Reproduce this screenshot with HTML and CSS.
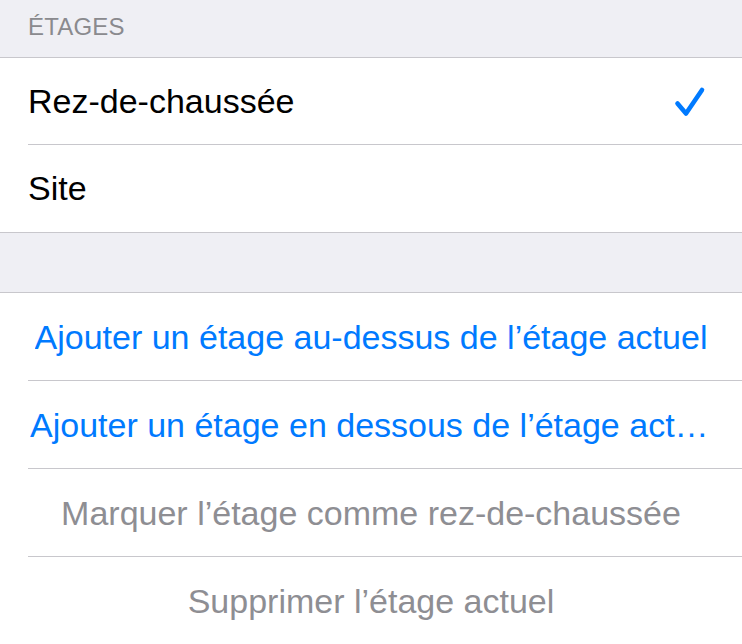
FILE: index.html
```html
<!DOCTYPE html>
<html lang="fr">
<head>
<meta charset="utf-8">
<title>Étages</title>
<link rel="stylesheet" href="styles.css">
</head>
<body>
<div class="screen">
  <div class="section-header">ÉTAGES</div>
  <div class="group">
    <div class="row">
      <span class="label">Rez-de-chaussée</span>
      <svg class="check" width="36" height="32" viewBox="0 0 36 32" aria-hidden="true">
        <path d="M5.5 17.5 L14 27.5 L30 4" fill="none" stroke="#007aff" stroke-width="4.6" stroke-linecap="round" stroke-linejoin="round"/>
      </svg>
    </div>
    <div class="row">
      <span class="label">Site</span>
    </div>
  </div>
  <div class="spacer"></div>
  <div class="group actions">
    <div class="row action">
      <span class="action-text blue">Ajouter un étage au-dessus de l’étage actuel</span>
    </div>
    <div class="row action">
      <span class="action-text blue">Ajouter un étage en dessous de l’étage actuel</span>
    </div>
    <div class="row action">
      <span class="action-text gray">Marquer l’étage comme rez-de-chaussée</span>
    </div>
    <div class="row action">
      <span class="action-text gray">Supprimer l’étage actuel</span>
    </div>
  </div>
</div>
</body>
</html>
```
FILE: styles.css
```css
* {
  box-sizing: border-box;
}

html, body {
  margin: 0;
  padding: 0;
  background: #efeff4;
}

body {
  font-family: "Liberation Sans", Arial, sans-serif;
  -webkit-font-smoothing: antialiased;
}

.screen {
  width: 742px;
  height: 644px;
  overflow: hidden;
  background: #efeff4;
}

.section-header {
  height: 57px;
  padding: 13px 28px 0;
  font-size: 24px;
  line-height: 28px;
  color: #8a8a8e;
  letter-spacing: 0.2px;
}

.group {
  background: #ffffff;
  border-top: 1px solid #c8c7cc;
  border-bottom: 1px solid #c8c7cc;
}

.row {
  position: relative;
  height: 87px;
  padding: 0 34px 0 28px;
  display: flex;
  align-items: center;
  justify-content: space-between;
  font-size: 34px;
  color: #000000;
}

.row + .row::before {
  content: "";
  position: absolute;
  left: 28px;
  right: 0;
  top: -1px;
  height: 1px;
  background: #c8c7cc;
}

.label {
  white-space: nowrap;
}

.check {
  display: block;
  margin-top: 1px;
}

.spacer {
  height: 59px;
}

.actions .row {
  height: 88px;
}

.action {
  justify-content: center;
  padding: 1px 30px 0;
}

.action-text {
  display: block;
  max-width: 100%;
  white-space: nowrap;
  overflow: hidden;
  text-overflow: ellipsis;
}

.blue {
  color: #007aff;
}

.gray {
  color: #8e8e93;
}
```
